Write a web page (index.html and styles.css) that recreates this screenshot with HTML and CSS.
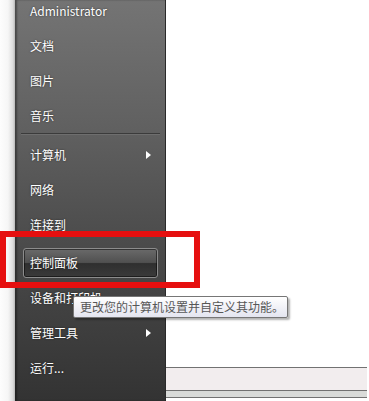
FILE: index.html
```html
<!DOCTYPE html>
<html lang="zh-CN">
<head>
    <meta charset="UTF-8">
    <meta name="viewport" content="width=device-width, initial-scale=1.0">
    <title>开始菜单</title>
    <link rel="stylesheet" href="styles.css">
</head>
<body>
    <div class="screen">
        <div class="edge"></div>

        <div class="panel">
            <ul class="menu">
                <li class="item">Administrator</li>
                <li class="item">文档</li>
                <li class="item">图片</li>
                <li class="item">音乐</li>
            </ul>
            <div class="separator"></div>
            <ul class="menu">
                <li class="item has-sub">计算机<span class="arrow"></span></li>
                <li class="item">网络</li>
                <li class="item">连接到</li>
                <li class="item item-hot"><span class="hot">控制面板</span></li>
                <li class="item">设备和打印机</li>
                <li class="item has-sub">管理工具<span class="arrow"></span></li>
                <li class="item">运行...</li>
            </ul>
        </div>

        <div class="desktop">
            <div class="taskbar">
                <div class="line dark"></div>
                <div class="band pale"></div>
                <div class="line dark"></div>
                <div class="band grey"></div>
                <div class="line dark"></div>
            </div>
        </div>

        <div class="highlight"></div>
        <div class="tooltip">更改您的计算机设置并自定义其功能。</div>
    </div>
</body>
</html>
```

FILE: styles.css
```css
body {
    margin: 0;
    padding: 0;
    background: #fff;
    font-family: "Noto Sans CJK SC", "Noto Sans", sans-serif;
}

.screen {
    position: relative;
    display: flex;
    width: 369px;
    height: 401px;
    overflow: hidden;
}

.edge {
    width: 15px;
    flex-shrink: 0;
    background: linear-gradient(to right, #fdfdfd 0, #f6f6f6 8px, #dcdcdc 13px, #b8b8b8 15px);
}

.panel {
    width: 151px;
    flex-shrink: 0;
    padding-top: 0;
    background: linear-gradient(to bottom, #747474 0, #606060 130px, #4a4a4a 250px, #333 401px);
    box-shadow: inset 2px 0 2px rgba(0, 0, 0, 0.35), inset -1px 0 0 #2a2a2a;
}

.menu {
    list-style: none;
    margin: 0;
    padding: 0;
}

.menu:first-child {
    margin-top: -7px;
}

.item {
    position: relative;
    display: flex;
    align-items: center;
    height: 35px;
    padding-left: 15px;
    color: #fff;
    font-size: 12px;
    text-shadow: 0 0 2px rgba(0, 0, 0, 0.6);
}

.item-hot {
    margin-top: 3px;
    padding-left: 8px;
}

.hot {
    display: flex;
    align-items: center;
    width: 127px;
    height: 28px;
    padding-left: 6px;
    border: 1px solid #8c8c8c;
    border-radius: 3px;
    background: linear-gradient(to bottom, #6a6a6a 0, #505050 48%, #2f2f2f 52%, #3a3a3a 100%);
    box-shadow: inset 0 0 0 1px rgba(0, 0, 0, 0.5);
}

.separator {
    height: 1px;
    margin: 0 6px 2px;
    background: #3b3b3b;
    border-bottom: 1px solid #6e6e6e;
}

.arrow {
    position: absolute;
    right: 15px;
    top: 50%;
    margin-top: -4px;
    border-left: 5px solid #fff;
    border-top: 4px solid transparent;
    border-bottom: 4px solid transparent;
}

.desktop {
    flex: 1;
    display: flex;
    flex-direction: column;
    justify-content: flex-end;
}

.taskbar {
    margin-right: 2px;
    margin-bottom: 3px;
}

.line {
    height: 1px;
}

.line.dark {
    background: #727272;
}

.band.pale {
    height: 22px;
    background: #f2edee;
}

.band.grey {
    height: 6px;
    background: #d9dbd9;
}

/* red marker drawn over the screenshot */
.highlight {
    position: absolute;
    left: 0;
    top: 231px;
    width: 188px;
    height: 45px;
    border: 6px solid #e60f0f;
}

.tooltip {
    position: absolute;
    left: 73px;
    top: 296px;
    width: 207px;
    height: 20px;
    padding-left: 6px;
    line-height: 20px;
    font-size: 12px;
    color: #575757;
    background: linear-gradient(to bottom, #ffffff 0, #e4e5f0 100%);
    border: 1px solid #767676;
    border-radius: 2px;
    box-shadow: 2px 2px 2px rgba(0, 0, 0, 0.3);
    white-space: nowrap;
}
```
